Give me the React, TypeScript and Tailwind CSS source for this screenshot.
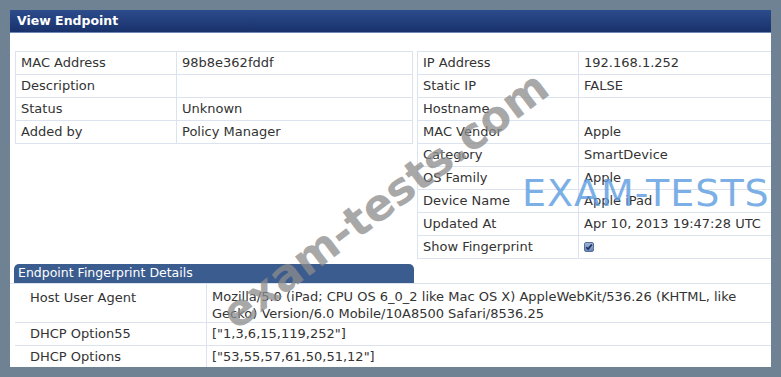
import React from 'react';

const leftRows: [string, string][] = [
  ['MAC Address', '98b8e362fddf'],
  ['Description', ''],
  ['Status', 'Unknown'],
  ['Added by', 'Policy Manager'],
];

const rightRows: [string, string][] = [
  ['IP Address', '192.168.1.252'],
  ['Static IP', 'FALSE'],
  ['Hostname', ''],
  ['MAC Vendor', 'Apple'],
  ['Category', 'SmartDevice'],
  ['OS Family', 'Apple'],
  ['Device Name', 'Apple iPad'],
  ['Updated At', 'Apr 10, 2013 19:47:28 UTC'],
  ['Show Fingerprint', 'CHECK'],
];

function CheckBox() {
  return (
    <span className="inline-flex h-[10px] w-[10px] items-center justify-center rounded-[2px] border border-[#5a6f94] bg-gradient-to-b from-[#9fb3d8] to-[#6a86bb]">
      <svg width="8" height="8" viewBox="0 0 8 8">
        <path d="M1.2 4.2 L3.1 6.1 L6.8 1.4" fill="none" stroke="#1c2f5a" strokeWidth="1.6" />
      </svg>
    </span>
  );
}

function InfoTable({ rows, labelW, valueW }: { rows: [string, string][]; labelW: number; valueW: number }) {
  return (
    <div className="shrink-0 border-t border-l border-[#dbe4ee]" style={{ width: labelW + valueW }}>
      {rows.map(([label, value]) => (
        <div key={label} className="flex h-[23px]">
          <div
            className="flex shrink-0 items-center border-r border-b border-[#dbe4ee] pl-[5px]"
            style={{ width: labelW }}
          >
            {label}
          </div>
          <div className="flex flex-1 items-center whitespace-nowrap border-r border-b border-[#dbe4ee] pl-[5px]">
            {value === 'CHECK' ? <CheckBox /> : value}
          </div>
        </div>
      ))}
    </div>
  );
}

export default function App() {
  return (
    <div
      className="relative h-[377px] w-[781px] overflow-hidden bg-[#6f8294] p-[10px] text-[13px] text-[#333]"
      style={{ fontFamily: '"DejaVu Sans", Verdana, sans-serif' }}
    >
      <div className="flex h-full w-full flex-col overflow-hidden bg-white">
        <div className="flex h-[23px] shrink-0 items-center border-b border-[#6d86b4] bg-gradient-to-b from-[#2d4c8c] to-[#18316b] px-[7px] text-[12.5px] font-bold text-white">
          View Endpoint
        </div>

        <div className="flex shrink-0 items-start gap-[4px] pl-[5px] pt-[18px]">
          <InfoTable rows={leftRows} labelW={161} valueW={237} />
          <InfoTable rows={rightRows} labelW={161} valueW={230} />
        </div>

        <div className="mt-[5px] shrink-0 border-b border-[#dbe4ee] pl-[4px]">
          <div className="flex h-[19px] w-[400px] items-center rounded-t-[5px] bg-[#3b5c8e] px-[4px] text-[12.5px] text-white">
            Endpoint Fingerprint Details
          </div>
        </div>

        <div className="flex flex-col pl-[5px]">
          <div className="flex h-[39px] border-b border-[#dbe4ee]">
            <div className="w-[192px] shrink-0 border-r border-[#dbe4ee] pl-[15px] pt-[4px]">Host User Agent</div>
            <div className="whitespace-nowrap pl-[5px] pt-[4px] leading-[17px]">
              Mozilla/5.0 (iPad; CPU OS 6_0_2 like Mac OS X) AppleWebKit/536.26 (KHTML, like
              <br />
              Gecko) Version/6.0 Mobile/10A8500 Safari/8536.25
            </div>
          </div>
          <div className="flex h-[23px] border-b border-[#dbe4ee]">
            <div className="flex w-[192px] shrink-0 items-center border-r border-[#dbe4ee] pl-[15px]">DHCP Option55</div>
            <div className="flex items-center pl-[5px]">["1,3,6,15,119,252"]</div>
          </div>
          <div className="flex h-[22px]">
            <div className="flex w-[192px] shrink-0 items-center border-r border-[#dbe4ee] pl-[15px]">DHCP Options</div>
            <div className="flex items-center pl-[5px]">["53,55,57,61,50,51,12"]</div>
          </div>
        </div>
      </div>

      {/* watermarks */}
      <div
        className="pointer-events-none absolute left-[385px] top-[200px] whitespace-nowrap text-[44px] font-bold text-[#8c8c8c] opacity-75"
        style={{ transform: 'translate(-50%, -50%) rotate(-37deg)' }}
      >
        exam-tests.com
      </div>
      <div className="pointer-events-none absolute left-[522px] top-[165px] whitespace-nowrap text-[38px] tracking-[1px] text-[#5c9ce0] opacity-80">
        EXAM-TESTS
      </div>
    </div>
  );
}
